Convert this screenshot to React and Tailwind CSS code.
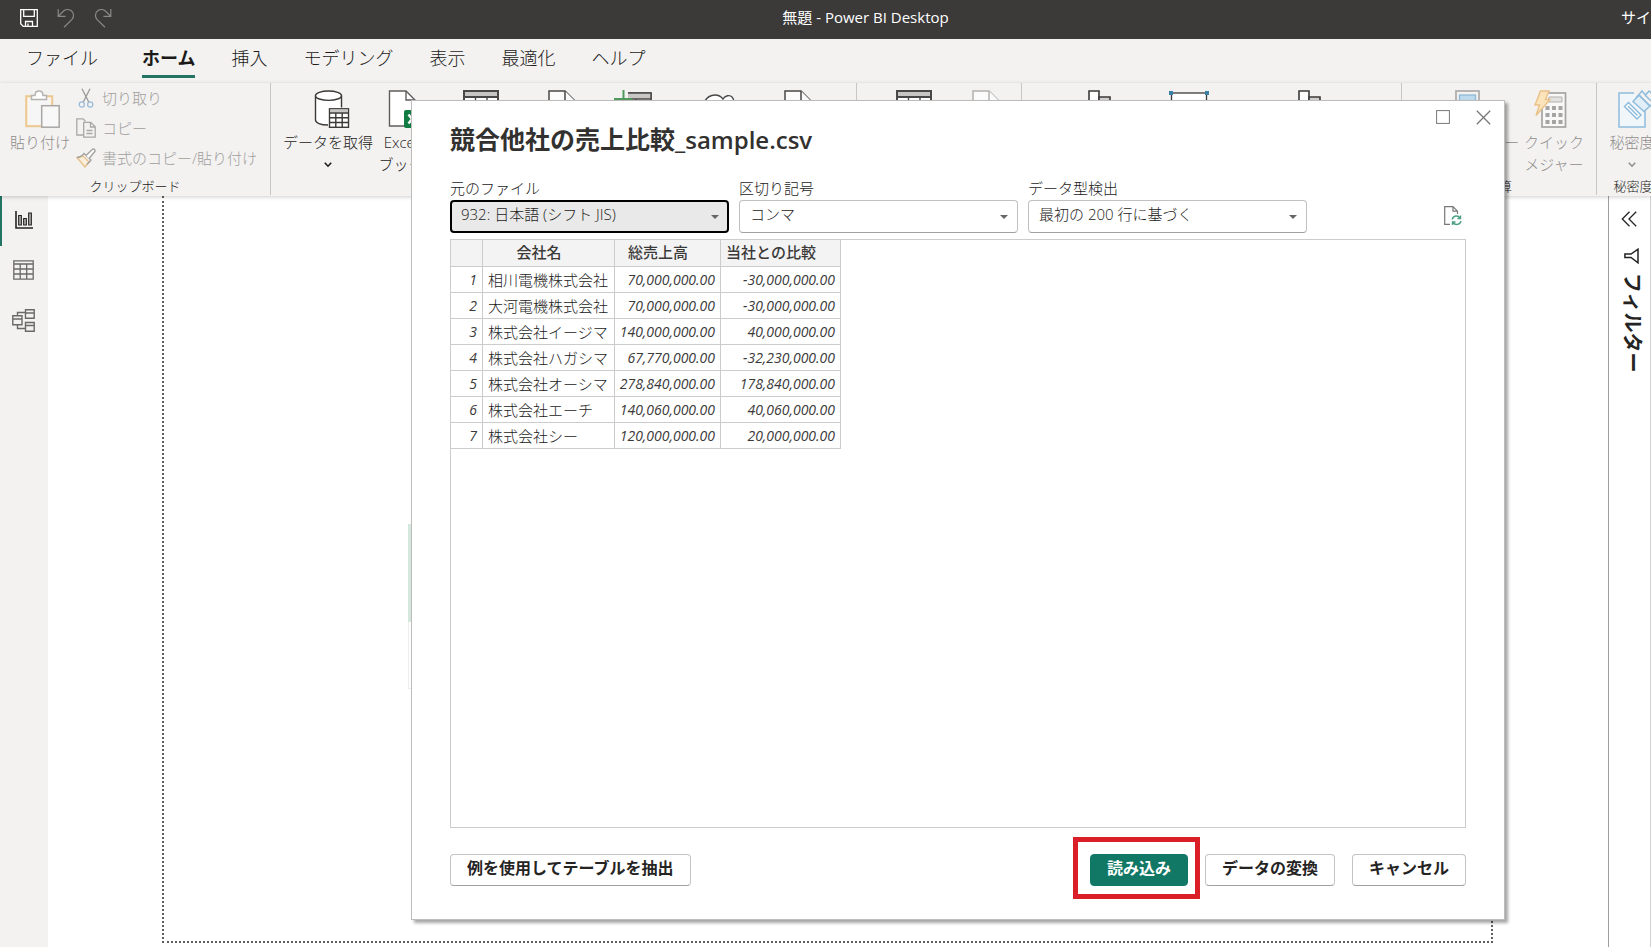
import React from "react";

function SaveIcon() {
  return (
    <svg width="18" height="18" viewBox="0 0 18 18" fill="none" stroke="#fff" strokeWidth="1.3">
      <path d="M.7.7H17.3V17.3H3.2L.7 14.8Z" />
      <path d="M3.7.7V7.3H14.3V.7M5.5 17.3V12.5H12.5V17.3M8 14.5V17" />
    </svg>
  );
}

function UndoIcon({ flip }) {
  return (
    <svg
      width="18"
      height="20"
      viewBox="0 0 18 20"
      fill="none"
      stroke="#8a8886"
      strokeWidth="1.2"
      className={flip ? "-scale-x-100" : ""}
    >
      <path d="M1.2 1V8.4H8.6M1.5 8.2L5.5 4C8 1.2 11.5.8 14 2.6C17.2 5 17.3 9 14.8 11.6L7 19.2" />
    </svg>
  );
}

function PasteIcon() {
  return (
    <svg width="42" height="38" viewBox="-6 0 42 38" fill="none">
      <rect x="1.2" y="6.2" width="26" height="30" fill="#faf4ea" stroke="#ecc891" strokeWidth="2" />
      <rect x="4" y="9" width="20" height="25" fill="#f6f6f6" />
      <path d="M6.5 9.500V5.500H10C10 2.500 11.800 1 14 1S18 2.500 18 5.500H21.500V9.500Z" fill="#fff" stroke="#b5b3b1" strokeWidth="1.5" />
      <rect x="16.700" y="15.700" width="17.500" height="21.500" fill="#f8f8f8" stroke="#a9a7a5" strokeWidth="1.500" />
    </svg>
  );
}

function CutIcon() {
  return (
    <svg width="20" height="20" viewBox="0 0 20 20" fill="none" strokeWidth="1.3">
      <path d="M6 .8L13 14.500M14 .8L7 14.500" stroke="#999" />
      <circle cx="5.800" cy="16.500" r="2.600" stroke="#9dbcd8" />
      <circle cx="14.200" cy="16.500" r="2.600" stroke="#9dbcd8" />
    </svg>
  );
}

function CopyIcon() {
  return (
    <svg width="20" height="20" viewBox="0 0 20 20" fill="none" stroke="#aaa8a6" strokeWidth="1.300">
      <path d="M7.500 17H.8V.8H7L9.500 3.300" />
      <path d="M7.700 4.300H14.700L19.200 8.800V19.200H7.700ZM14.500 4.500V9H19M10.500 12.500H16.500M10.500 15.500H16.500" />
    </svg>
  );
}

function BrushIcon() {
  return (
    <svg width="20" height="20" viewBox="0 0 20 20" fill="none" strokeWidth="1.400">
      <path d="M1 9.500L7 8L13 14L9 19Z" fill="#fbeedb" stroke="#e8c28c" />
      <path d="M1 9.500C4 9.500 6 8 8 5.500L15 12C13.500 14 12 15 11 16.500" stroke="#a5a3a1" />
      <path d="M10 7.500L16.500 1.200C18 .4 19.600 2 18.800 3.500L13 10.500" fill="#fff" stroke="#a5a3a1" />
    </svg>
  );
}

function DatabaseIcon() {
  return (
    <svg width="44" height="38" viewBox="-8 0 44 38" fill="none" stroke="#3b3a39" strokeWidth="1.400">
      <path d="M1.500 5.500V30C1.500 32.800 6.500 35 13 35H15V18H27.500V5.500" fill="#fff" stroke="none" />
      <path d="M1.500 5.500V30C1.500 32.800 6.500 35 14 35M27.500 5.500V17.500" />
      <ellipse cx="14.500" cy="5.700" rx="13" ry="4.700" fill="#fff" />
      <rect x="15.500" y="18.800" width="19" height="18.500" fill="#fff" />
      <path d="M16 19.500H34V22.500H16Z" fill="#c8c6c4" stroke="none" />
      <path d="M15.500 23H34.500M15.500 27.700H34.500M15.500 32.500H34.500M21.800 23V37.500M28.200 23V37.500" />
    </svg>
  );
}

function ExcelIcon() {
  return (
    <svg width="26" height="38" viewBox="0 0 26 38" fill="none" className="overflow-visible">
      <path d="M1.500 1H18L27 10V36H1.500Z" fill="#fff" stroke="#605e5c" strokeWidth="1.400" />
      <path d="M18 1V10H27" stroke="#605e5c" strokeWidth="1.400" />
      <rect x="16" y="20" width="18" height="18" rx="2" fill="#107c41" />
      <path d="M20.500 24.500L27.500 33.500M27.500 24.500L20.500 33.500" stroke="#fff" strokeWidth="2.400" />
    </svg>
  );
}

function TableIcon() {
  return (
    <svg width="36" height="36" viewBox="0 0 36 36" fill="none" stroke="#4a4846" strokeWidth="2">
      <rect x="1" y="1" width="34" height="34" fill="#fff" />
      <path d="M1 1H35V7H1Z" fill="#c8c6c4" />
      <path d="M1 16H35M1 25H35M12.500 7V35M24 7V35" strokeWidth="1.400" />
    </svg>
  );
}

function DocIcon({ stroke }) {
  return (
    <svg width="28" height="36" viewBox="0 0 28 36" fill="#fbfbfb" stroke={stroke} strokeWidth="1.500">
      <path d="M1 1H17L27 11V35H1Z" />
      <path d="M17 1V11H27" />
    </svg>
  );
}

function AddTableIcon() {
  return (
    <svg width="38" height="38" viewBox="0 0 38 38" fill="none">
      <rect x="5" y="3" width="32" height="34" fill="#fff" stroke="#4a4846" strokeWidth="1.500" />
      <path d="M13 3H37V9H13Z" fill="#c8c6c4" stroke="#4a4846" strokeWidth="1.500" />
      <path d="M0 0H14V16H0Z" fill="#f3f2f1" />
      <path d="M9.500 0V18M0 9H18" stroke="#4f9a5c" strokeWidth="2" />
      <path d="M22 9V37" stroke="#4a4846" strokeWidth="1.300" />
    </svg>
  );
}

function CloudIcon() {
  return (
    <svg width="32" height="36" viewBox="0 -4 32 36" fill="#fff" stroke="#4a4846" strokeWidth="1.400">
      <path d="M1 8C4 3 8 1 12 1C16 1 18.500 3 20 5C22 1.500 27 .5 29 3C31 5 31.500 9 30 12L16 31L1 12Z" />
    </svg>
  );
}

function VisualIcon() {
  return (
    <svg width="24" height="34" viewBox="0 0 24 34" fill="#fff" stroke="#3b3a39" strokeWidth="1.600">
      <path d="M1 1H11V33H1Z" />
      <path d="M11 7H22V33H11Z" fill="#d2d0ce" />
    </svg>
  );
}

function TextBoxIcon() {
  return (
    <svg width="40" height="34" viewBox="0 0 40 34">
      <rect x="2.500" y="3" width="35" height="29" fill="#fff" stroke="#3b3a39" strokeWidth="1.300" />
      <path d="M0 1H4V5H0ZM36 1H40V5H36Z" fill="#3a7fa5" />
    </svg>
  );
}

function MeasureIcon() {
  return (
    <svg width="25" height="36" viewBox="0 0 25 36" stroke="#b1afad" strokeWidth="1.800" fill="#f3f2f1">
      <rect x="1" y="1" width="23" height="34" />
      <rect x="4.500" y="5" width="16" height="8" fill="#bcd9ee" stroke="#8fb9d6" strokeWidth="1.300" />
    </svg>
  );
}

function QuickMeasureIcon() {
  return (
    <svg width="41" height="38" viewBox="0 0 41 38">
      <rect x="8" y="3" width="23.500" height="34" fill="#f8f8f8" stroke="#a6a4a2" strokeWidth="1.700" />
      <path d="M15 7H28V12H14Z" fill="#e4e2e0" stroke="#b3b1af" />
      <path
        d="M11.500 16H15.500V20H11.500ZM18 16H22V20H18ZM24.500 16H28.500V20H24.500ZM11.500 23H15.500V27H11.500ZM18 23H22V27H18ZM24.500 23H28.500V27H24.500ZM11.500 30H15.500V34H11.500ZM18 30H22V34H18ZM24.500 30H28.500V34H24.500Z"
        fill="#a6a4a2"
      />
      <path d="M6.500 1H15L11.500 9.500H16L2 25.500L5.500 15H1Z" fill="#fbe3bb" stroke="#e9c085" strokeWidth="1.400" />
    </svg>
  );
}

function SensitivityIcon() {
  return (
    <svg width="48" height="38" viewBox="-10 0 48 38" fill="none" stroke="#8fbcdc" strokeWidth="1.500">
      <path d="M16 3H1V37H27V20" fill="#f1f6fa" />
      <path d="M6.500 16.500L10.500 12.500L23 25L19 29Z" fill="#fff" />
      <path d="M10 16L19.500 25.500" />
      <path d="M15 11.500L21 5L32 16L26 21.500Z" fill="#e3eff8" />
      <path d="M18 8L24 1L27.500 5L31 1L38 7M21 5L32 16L38 10M27 5L33 11" />
    </svg>
  );
}

function ChevronDown() {
  return (
    <svg width="8" height="6" viewBox="0 0 8 6" fill="none" stroke="currentColor" strokeWidth="1.600">
      <path d="M.8.8L4 4.200L7.200.8" />
    </svg>
  );
}

function RibbonButton({ width, icon, lines = [], name, chevron, className = "text-[#1b1a19]" }) {
  return (
    <button
      type="button"
      aria-label={name}
      className={`flex shrink-0 flex-col items-center text-[15px] leading-[22px] whitespace-nowrap ${width} ${className}`}
    >
      <span className="flex h-[41px] items-start justify-center">{icon}</span>
      {lines.map((l) => (
        <span key={l}>{l}</span>
      ))}
      {chevron && (
        <span className="flex h-6 items-center">
          <ChevronDown />
        </span>
      )}
    </button>
  );
}

function RibbonGroup({ width, label, children, last }) {
  return (
    <section className={`flex shrink-0 flex-col ${width}`}>
      <div className={`flex h-28 flex-col ${last ? "" : "border-r border-[#c8c6c4]"}`}>
        <div className="flex h-[94px] items-start">{children}</div>
        <div className="h-[18px] text-center text-[13px] leading-[18px] whitespace-nowrap text-[#1b1a19]">{label}</div>
      </div>
    </section>
  );
}

const tabs = ["ファイル", "ホーム", "挿入", "モデリング", "表示", "最適化", "ヘルプ"];

const clipboardActions = [
  { label: "切り取り", icon: <CutIcon /> },
  { label: "コピー", icon: <CopyIcon /> },
  { label: "書式のコピー/貼り付け", icon: <BrushIcon /> },
];

function TitleBar() {
  return (
    <header className="grid h-[39px] shrink-0 grid-cols-[1fr_auto_1fr] items-center overflow-hidden bg-[#3b3a39] pb-1 text-white">
      <div className="flex items-center gap-[19px] pl-5">
        <button type="button" aria-label="保存"><SaveIcon /></button>
        <button type="button" aria-label="元に戻す"><UndoIcon /></button>
        <button type="button" aria-label="やり直し"><UndoIcon flip /></button>
      </div>
      <div className="pl-20 text-[15px]">無題 - Power BI Desktop</div>
      <div className="flex justify-end">
        <span className="w-[30px] overflow-hidden text-[15px] whitespace-nowrap">サイ</span>
      </div>
    </header>
  );
}

function Tabs() {
  return (
    <nav className="flex h-11 shrink-0 items-start gap-9 bg-[#f3f2f1] pl-[26px] text-lg text-[#1b1a19]">
      {tabs.map((t) => (
        <a
          key={t}
          href="#"
          className={t === "ホーム" ? "ml-2 border-b-[3px] border-[#217562] pt-[2px] leading-[34px] font-bold" : "leading-[38px] font-light"}
        >
          {t}
        </a>
      ))}
    </nav>
  );
}

function Ribbon() {
  return (
    <div className="z-10 flex h-[113px] shrink-0 overflow-hidden bg-[#f3f2f1] font-light shadow-[0_1px_4px_rgba(0,0,0,0.2)]">
      <RibbonGroup width="w-[271px]" label="クリップボード">
        <div className="flex pt-[7px] pl-1">
          <RibbonButton width="w-[72px]" icon={<PasteIcon />} lines={["貼り付け"]} className="text-[#8f8d8b]" />
        </div>
        <ul className="text-[15px] text-[#a19f9d]">
          {clipboardActions.map((a) => (
            <li key={a.label}>
              <button type="button" className="flex h-[30px] items-center gap-[6px] whitespace-nowrap">
                {a.icon}
                {a.label}
              </button>
            </li>
          ))}
        </ul>
      </RibbonGroup>
      <RibbonGroup width="w-[586px]">
        <div className="flex pt-[7px] pl-[7px]">
          <RibbonButton width="w-[100px]" icon={<DatabaseIcon />} lines={["データを取得"]} chevron />
          <RibbonButton width="w-[46px]" icon={<ExcelIcon />} lines={["Excel", "ブック"]} />
          <RibbonButton width="w-[114px]" name="データ ハブ" icon={<TableIcon />} />
          <RibbonButton width="w-12" name="SQL Server" icon={<DocIcon stroke="#4a4846" />} />
          <RibbonButton width="w-[94px]" name="データの入力" icon={<AddTableIcon />} />
          <RibbonButton width="w-[78px]" name="Dataverse" icon={<CloudIcon />} />
          <RibbonButton width="w-20" name="最近のソース" icon={<DocIcon stroke="#4a4846" />} />
        </div>
      </RibbonGroup>
      <RibbonGroup width="w-[165px]">
        <div className="flex pt-[7px] pl-[17px]">
          <RibbonButton width="w-[80px]" name="データの変換" icon={<TableIcon />} />
          <RibbonButton width="w-[64px]" name="更新" icon={<DocIcon stroke="#b3b1af" />} />
        </div>
      </RibbonGroup>
      <RibbonGroup width="w-[380px]">
        <div className="flex pt-[7px] pl-8">
          <RibbonButton width="w-[92px]" name="新しいビジュアル" icon={<VisualIcon />} />
          <RibbonButton width="w-[86px]" name="テキスト ボックス" icon={<TextBoxIcon />} />
          <RibbonButton width="w-[156px]" name="その他のビジュアル" icon={<VisualIcon />} />
        </div>
      </RibbonGroup>
      <RibbonGroup width="w-[195px]" label="計算">
        <div className="flex pt-[7px] pl-5">
          <RibbonButton width="w-[90px]" icon={<MeasureIcon />} lines={["新しいメジャー"]} className="text-[#8f8d8b]" />
          <RibbonButton width="w-[84px]" icon={<QuickMeasureIcon />} lines={["クイック", "メジャー"]} className="text-[#8f8d8b]" />
        </div>
      </RibbonGroup>
      <RibbonGroup width="w-[72px]" label="秘密度" last>
        <div className="flex pt-[7px]">
          <RibbonButton width="w-[70px]" icon={<SensitivityIcon />} lines={["秘密度"]} chevron className="text-[#8f8d8b]" />
        </div>
      </RibbonGroup>
    </div>
  );
}

function Sidebar() {
  return (
    <aside className="flex w-12 shrink-0 flex-col bg-[#f3f2f1]">
      <button type="button" aria-label="レポート ビュー" className="flex h-[50px] items-center border-l-2 border-[#217562] pb-[2px] pl-[13px]">
        <svg width="18" height="18" viewBox="0 0 18 18" fill="#c8c6c4" stroke="#252423">
          <path d="M1 0V17H18" fill="none" strokeWidth="1.600" />
          <path d="M3.700 4.500H6.300V14H3.700ZM8.700 7.500H11.300V14H8.700ZM13.700 2H16.300V14H13.700Z" strokeWidth="1.200" />
        </svg>
      </button>
      <button type="button" aria-label="データ ビュー" className="flex h-[50px] items-center pb-[2px] pl-[13px]">
        <svg width="21" height="20" viewBox="0 0 21 20" fill="none" stroke="#6b6967" strokeWidth="1.300">
          <path d="M.8.8H20.200V19.200H.8ZM.8 4H20.200M.8 9H20.200M.8 14H20.200M7.200 4V19M13.700 4V19" />
        </svg>
      </button>
      <button type="button" aria-label="モデル ビュー" className="flex h-[50px] items-center pb-[2px] pl-3">
        <svg width="23" height="23" viewBox="0 0 23 23" fill="none" stroke="#6b6967" strokeWidth="1.400">
          <path d="M.8 6.800H10V15.800H.8ZM.8 10H10M13.500.8H22.200V9.200H13.500ZM13.500 4H22.200M13.500 13.500H22.200V22.200H13.500ZM13.500 16.500H22.200M5.500 6.800V3.500H13.500M5.500 15.800V19.500H13.500" />
        </svg>
      </button>
    </aside>
  );
}

function FilterPane() {
  return (
    <aside className="flex w-[43px] shrink-0 border-l border-[#a19f9d] bg-white">
      <div className="flex flex-1 flex-col items-center border-r border-[#d2d0ce] pt-[15px] pr-[2px] text-[#252423]">
        <button type="button" aria-label="展開">
          <svg width="16" height="16" viewBox="0 0 16 16" fill="none" stroke="currentColor" strokeWidth="1.300">
            <path d="M8.500.8L1.300 8L8.500 15.200M15.200.8L8 8L15.200 15.200" />
          </svg>
        </button>
        <div className="flex flex-col items-center gap-[9px] pt-[21px] pl-[6px]">
          <svg width="15" height="16" viewBox="0 0 15 16" fill="none" stroke="currentColor" strokeWidth="1.500">
            <path d="M14 1.200V14.800L7 9.500H.9V6H7Z" />
          </svg>
          <h2 className="text-xl leading-6 font-bold [text-orientation:sideways] [writing-mode:vertical-rl]">フィルター</h2>
        </div>
      </div>
    </aside>
  );
}

function SelectField({ id, label, value, active }) {
  return (
    <div className="flex w-[279px] flex-col">
      <label htmlFor={id} className="pb-[2px] text-[15px] leading-5 font-light text-[#1b1a19]">
        {label}
      </label>
      <div className="grid items-center">
        <select
          id={id}
          defaultValue={value}
          className={`col-start-1 row-start-1 h-[33px] appearance-none rounded pr-8 pb-1 text-[15px] font-light text-[#1b1a19] ${
            active ? "border-2 border-black bg-[#e9e9e9] pl-[9px]" : "border border-[#c0c0c0] border-b-[#a0a0a0] bg-white pl-[10px]"
          }`}
        >
          <option>{value}</option>
        </select>
        <svg width="8" height="4" viewBox="0 0 8 4" fill="#666" className="pointer-events-none col-start-1 row-start-1 mr-[10px] justify-self-end">
          <path d="M0 0H8L4 4Z" />
        </svg>
      </div>
    </div>
  );
}

const rows = [
  ["相川電機株式会社", "70,000,000.00", "-30,000,000.00"],
  ["大河電機株式会社", "70,000,000.00", "-30,000,000.00"],
  ["株式会社イージマ", "140,000,000.00", "40,000,000.00"],
  ["株式会社ハガシマ", "67,770,000.00", "-32,230,000.00"],
  ["株式会社オーシマ", "278,840,000.00", "178,840,000.00"],
  ["株式会社エーチ", "140,060,000.00", "40,060,000.00"],
  ["株式会社シー", "120,000,000.00", "20,000,000.00"],
];

function PreviewTable() {
  const line = "border-r border-b border-[#cccccc]";
  return (
    <table className="table-fixed border-separate border-spacing-0 text-[#3b3a39]">
      <colgroup>
        <col className="w-8" />
        <col className="w-[132px]" />
        <col className="w-[106px]" />
        <col className="w-[120px]" />
      </colgroup>
      <thead>
        <tr className="h-[27px] bg-[#f3f3f3] text-[15px] leading-5">
          <th className={`${line} p-0`} />
          {["会社名", "総売上高", "当社との比較"].map((h) => (
            <th key={h} className={`${line} p-0 pr-[19px] pb-[2px] font-medium`}>
              {h}
            </th>
          ))}
        </tr>
      </thead>
      <tbody>
        {rows.map(([name, total, diff], i) => (
          <tr key={name} className="h-[26px] text-[14px] leading-5">
            <td className={`${line} p-0 pr-[5px] text-right italic`}>{i + 1}</td>
            <td className={`${line} p-0 pl-[5px] text-[15px] font-light whitespace-nowrap text-[#1b1a19]`}>{name}</td>
            <td className={`${line} p-0 pr-[5px] text-right italic`}>{total}</td>
            <td className={`${line} p-0 pr-[5px] text-right italic`}>{diff}</td>
          </tr>
        ))}
      </tbody>
    </table>
  );
}

function DialogButton({ children, primary }) {
  return (
    <button
      type="button"
      className={`h-8 rounded border px-4 pb-1 text-[16px] leading-[26px] font-bold whitespace-nowrap ${
        primary ? "border-[#117865] bg-[#117865] text-white" : "border-[#c4c4c4] border-b-[#a0a0a0] bg-white text-[#252423]"
      }`}
    >
      {children}
    </button>
  );
}

function ImportDialog() {
  return (
    <div
      role="dialog"
      aria-labelledby="dialog-title"
      className="absolute top-[100px] right-[146px] bottom-[27px] left-[411px] z-20 flex flex-col border border-[#bdbdbd] bg-white pb-[33px] shadow-[3px_3px_3px_rgba(0,0,0,0.35)]"
    >
      <div className="flex justify-between pr-[13px] pl-[38px]">
        <h1 id="dialog-title" className="pt-5 text-[25px] leading-9 font-bold text-[#323130]">
          競合他社の売上比較<span className="text-2xl font-semibold">_sample.csv</span>
        </h1>
        <div className="flex items-start gap-[26px] pt-[9px]">
          <button type="button" aria-label="最大化">
            <svg width="14" height="14" viewBox="0 0 14 14" fill="none" stroke="#777">
              <rect x=".6" y=".6" width="12.800" height="12.800" />
            </svg>
          </button>
          <button type="button" aria-label="閉じる">
            <svg width="15" height="15" viewBox="0 0 15 15" fill="none" stroke="#777" strokeWidth="1.300">
              <path d="M.8.8L14.200 14.200M14.200.8L.8 14.200" />
            </svg>
          </button>
        </div>
      </div>
      <div className="flex flex-1 flex-col px-[38px] pt-[21px]">
        <div className="flex items-end gap-[10px]">
          <SelectField id="origin" label="元のファイル" value="932: 日本語 (シフト JIS)" active />
          <SelectField id="delimiter" label="区切り記号" value="コンマ" />
          <SelectField id="detect" label="データ型検出" value="最初の 200 行に基づく" />
          <button type="button" aria-label="更新" className="mr-1 mb-[7px] ml-auto">
            <svg width="18" height="20" viewBox="0 0 18 20" fill="none">
              <path d="M6 18.300H.7V.7H9L13.500 5.200V8M9 .7V5.200H13.500" stroke="#777" strokeWidth="1.200" />
              <path d="M8.200 13.500C9 9.500 14 8.800 16 12M16.500 9.500V12.500H13.500M17 15C16 19 11 19.600 9 16.500M8.500 19V16H11.500" stroke="#4ca085" strokeWidth="1.400" />
            </svg>
          </button>
        </div>
        <div className="mt-[6px] flex-1 border border-[#cccccc]">
          <PreviewTable />
        </div>
        <div className="mt-[26px] flex items-center justify-between">
          <DialogButton>例を使用してテーブルを抽出</DialogButton>
          <div className="flex gap-[17px]">
            <div className="relative">
              <DialogButton primary>読み込み</DialogButton>
              <div className="pointer-events-none absolute -top-[17px] -right-3 -bottom-[13px] -left-[17px] border-[5px] border-[#da1f28]" />
            </div>
            <DialogButton>データの変換</DialogButton>
            <DialogButton>キャンセル</DialogButton>
          </div>
        </div>
      </div>
    </div>
  );
}

export default function App() {
  return (
    <div
      lang="ja"
      className="relative flex h-screen flex-col overflow-hidden bg-white font-['Open_Sans','Noto_Sans_CJK_JP',sans-serif]"
    >
      <TitleBar />
      <Tabs />
      <Ribbon />
      <div className="flex min-h-0 flex-1">
        <Sidebar />
        <main className="flex flex-1 pr-[115px] pb-1 pl-[114px]">
          <div className="relative flex-1 border-2 border-t-0 border-dotted border-[#605e5c]">
            <div className="absolute top-[328px] left-[244px] w-52 border-b border-l border-[#eeeeee]">
              <div className="-ml-px h-[98px] bg-[#d5e8de]" />
              <div className="h-[66px] bg-white" />
            </div>
          </div>
        </main>
        <FilterPane />
      </div>
      <ImportDialog />
    </div>
  );
}
